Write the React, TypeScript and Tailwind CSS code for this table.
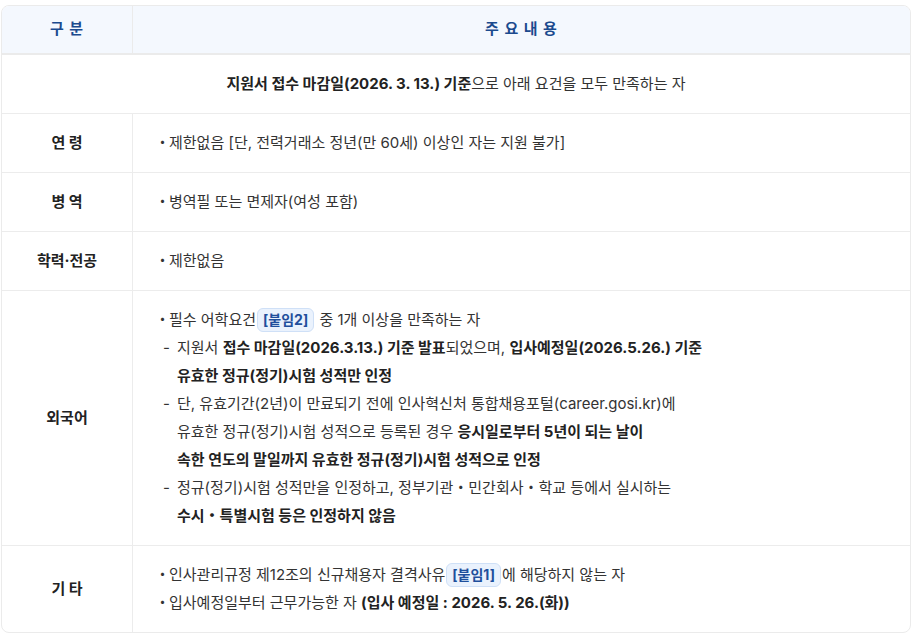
import type { ReactNode } from 'react';

function Badge({ children }: { children: ReactNode }) {
  return (
    <span className="mx-[1px] inline-block rounded-md border border-[#cfe0f7] bg-[#eaf2fd] px-[5px] text-[14px] leading-[22px] font-bold text-[#1f4f9c]">
      {children}
    </span>
  );
}

function Bullet({ children }: { children: ReactNode }) {
  return (
    <div className="flex">
      <span className="w-[14px] shrink-0 text-center">・</span>
      <span>{children}</span>
    </div>
  );
}

function Dash({ children }: { children: ReactNode }) {
  return (
    <div className="flex pl-[8px]">
      <span className="w-[14px] shrink-0">-</span>
      <span>{children}</span>
    </div>
  );
}

function Indent({ children }: { children: ReactNode }) {
  return <div className="pl-[22px]">{children}</div>;
}

function Row({ label, children, h, last }: { label: string; children: ReactNode; h: string; last?: boolean }) {
  return (
    <div className={`grid grid-cols-[131px_1fr] ${last ? '' : 'border-b border-[#ececec]'} ${h}`}>
      <div className="flex items-center justify-center border-r border-[#ececec] font-bold text-[#222]">{label}</div>
      <div className="flex flex-col justify-center pl-[22px] text-[#333]">{children}</div>
    </div>
  );
}

export default function App() {
  return (
    <div className="min-h-screen bg-white pt-[5px] pl-[1px]" style={{ fontFamily: 'Inter, "Noto Sans CJK KR", sans-serif' }}>
      <div className="w-[910px] overflow-hidden rounded-lg border border-[#ebebeb] text-[15px]">
        <div className="grid h-[49px] grid-cols-[131px_1fr] border-b-2 border-[#ebebeb] bg-[#f4f8fe] font-bold text-[#1b4a8e]">
          <div className="flex items-center justify-center border-r border-[#ebebeb] tracking-[1px]">구 분</div>
          <div className="flex items-center justify-center tracking-[1px]">주 요 내 용</div>
        </div>
        <div className="flex h-[59px] items-center justify-center border-b border-[#ececec] text-[#333]">
          <span>
            <b className="text-[#222]">지원서 접수 마감일(2026. 3. 13.) 기준</b>으로 아래 요건을 모두 만족하는 자
          </span>
        </div>
        <Row label="연 령" h="h-[59px]">
          <Bullet>제한없음 [단, 전력거래소 정년(만 60세) 이상인 자는 지원 불가]</Bullet>
        </Row>
        <Row label="병 역" h="h-[59px]">
          <Bullet>병역필 또는 면제자(여성 포함)</Bullet>
        </Row>
        <Row label="학력·전공" h="h-[59px]">
          <Bullet>제한없음</Bullet>
        </Row>
        <Row label="외국어" h="h-[255px]">
          <div className="leading-[28px]">
            <Bullet>
              필수 어학요건<Badge>[붙임2]</Badge> 중 1개 이상을 만족하는 자
            </Bullet>
            <Dash>
              지원서 <b className="text-[#222]">접수 마감일(2026.3.13.) 기준 발표</b>되었으며,{' '}
              <b className="text-[#222]">입사예정일(2026.5.26.) 기준</b>
            </Dash>
            <Indent>
              <b className="text-[#222]">유효한 정규(정기)시험 성적만 인정</b>
            </Indent>
            <Dash>단, 유효기간(2년)이 만료되기 전에 인사혁신처 통합채용포털(career.gosi.kr)에</Dash>
            <Indent>
              유효한 정규(정기)시험 성적으로 등록된 경우 <b className="text-[#222]">응시일로부터 5년이 되는 날이</b>
            </Indent>
            <Indent>
              <b className="text-[#222]">속한 연도의 말일까지 유효한 정규(정기)시험 성적으로 인정</b>
            </Indent>
            <Dash>정규(정기)시험 성적만을 인정하고, 정부기관・민간회사・학교 등에서 실시하는</Dash>
            <Indent>
              <b className="text-[#222]">수시・특별시험 등은 인정하지 않음</b>
            </Indent>
          </div>
        </Row>
        <Row label="기 타" h="h-[86px]" last>
          <div className="leading-[28px]">
            <Bullet>
              인사관리규정 제12조의 신규채용자 결격사유<Badge>[붙임1]</Badge>에 해당하지 않는 자
            </Bullet>
            <Bullet>
              입사예정일부터 근무가능한 자 <b className="text-[#222]">(입사 예정일 : 2026. 5. 26.(화))</b>
            </Bullet>
          </div>
        </Row>
      </div>
    </div>
  );
}
